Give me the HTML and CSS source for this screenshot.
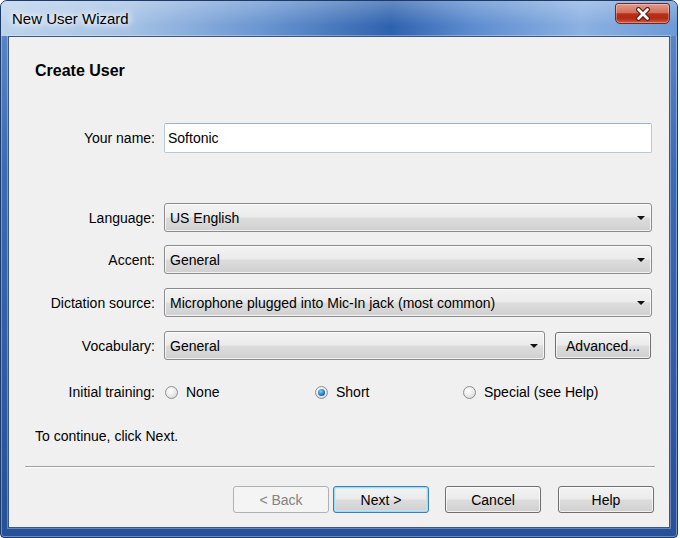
FILE: index.html
```html
<!DOCTYPE html>
<html lang="en">
<head>
    <meta charset="UTF-8">
    <meta name="viewport" content="width=device-width, initial-scale=1.0">
    <title>New User Wizard</title>
    <link rel="stylesheet" href="styles.css">
</head>
<body>
    <div class="window">
        <div class="titlebar">
            <span class="title">New User Wizard</span>
            <button class="close" type="button" aria-label="Close">
                <svg width="18" height="14" viewBox="0 0 18 14">
                    <path d="M4.5 2.5 L13.5 11.5 M13.5 2.5 L4.5 11.5" stroke="#5b2116" stroke-width="5" stroke-linecap="round" fill="none"/>
                    <path d="M4.5 2.5 L13.5 11.5 M13.5 2.5 L4.5 11.5" stroke="#fff" stroke-width="2.6" stroke-linecap="round" fill="none"/>
                </svg>
            </button>
        </div>
        <div class="frame">
            <div class="client">
                <div class="content">
                    <h1>Create User</h1>

                    <div class="row row-name">
                        <label for="userName">Your name:</label>
                        <input type="text" id="userName" class="textbox" value="Softonic">
                    </div>

                    <div class="row row-language">
                        <label>Language:</label>
                        <div class="combo"><span>US English</span><i class="arrow"></i></div>
                    </div>
                    <div class="row">
                        <label>Accent:</label>
                        <div class="combo"><span>General</span><i class="arrow"></i></div>
                    </div>
                    <div class="row">
                        <label>Dictation source:</label>
                        <div class="combo"><span>Microphone plugged into Mic-In jack (most common)</span><i class="arrow"></i></div>
                    </div>
                    <div class="row">
                        <label>Vocabulary:</label>
                        <div class="combo combo-short"><span>General</span><i class="arrow"></i></div>
                        <button type="button" class="btn btn-advanced">Advanced...</button>
                    </div>

                    <div class="row row-radios">
                        <label>Initial training:</label>
                        <div class="radios">
                            <span class="radio"><i class="dot"></i>None</span>
                            <span class="radio checked"><i class="dot"></i>Short</span>
                            <span class="radio"><i class="dot"></i>Special (see Help)</span>
                        </div>
                    </div>

                    <p class="hint">To continue, click Next.</p>
                </div>

                <div class="footer">
                    <div class="separator"></div>
                    <div class="buttons">
                        <button type="button" class="btn btn-back" disabled>&lt; Back</button>
                        <button type="button" class="btn btn-next">Next &gt;</button>
                        <button type="button" class="btn btn-cancel">Cancel</button>
                        <button type="button" class="btn btn-help">Help</button>
                    </div>
                </div>
            </div>
        </div>
    </div>
</body>
</html>
```

FILE: styles.css
```css
body {
    margin: 0;
    background: #fff;
    font-family: "Liberation Sans", Arial, sans-serif;
    font-size: 14px;
    color: #000;
}
.window {
    width: 678px;
    height: 538px;
    box-sizing: border-box;
    border: 1px solid #1d3a68;
    border-radius: 7px 7px 4px 4px;
    overflow: hidden;
    background: linear-gradient(to bottom, #5f8cca 0, #3b6cb6 30%, #25509a 100%);
    box-shadow: inset 0 0 0 1px rgba(255,255,255,0.35);
}
.titlebar {
    height: 35px;
    display: flex;
    align-items: flex-start;
    background:
        linear-gradient(to bottom, rgba(255,255,255,0.25), rgba(255,255,255,0) 70%),
        linear-gradient(to right, #bcd3ec 0, #a4c1e5 130px, #6a96d1 260px, #2f62ae 390px, #5c8ccf 470px, #8cb1e2 580px, #6c9ad7 100%);
}
.title {
    line-height: 35px;
    font-size: 15px;
    padding-left: 11px;
    text-shadow: 0 0 6px #fff, 0 0 10px #fff, 0 0 14px rgba(255,255,255,0.8);
}
.close {
    margin: 2px 7px 0 auto;
    width: 55px;
    height: 21px;
    padding: 0;
    border: 1px solid #6b2a22;
    border-radius: 3px 3px 5px 5px;
    background: linear-gradient(to bottom, #e39a8a 0, #d2705c 45%, #bd2f17 52%, #b02a14 75%, #d35a40 100%);
    box-shadow: inset 0 0 0 1px rgba(255,255,255,0.3);
    display: flex;
    align-items: center;
    justify-content: center;
}
.frame {
    padding: 0 7px 9px 7px;
}
.client {
    height: 490px;
    border: 1px solid #3e5679;
    background: #f0f0f0;
    display: flex;
    flex-direction: column;
    box-shadow: 0 0 0 1px rgba(255,255,255,0.3);
}
.content {
    padding: 24px 17px 0 26px;
}
h1 {
    margin: 0;
    font-size: 16px;
    line-height: 20px;
    font-weight: bold;
}
.row {
    display: flex;
    align-items: center;
    margin-top: 14px;
}
.row label {
    width: 120px;
    margin-right: 9px;
    text-align: right;
    flex-shrink: 0;
}
.row-name {
    margin-top: 42px;
}
.row-language {
    margin-top: 50px;
}
.row-language + .row {
    margin-top: 13px;
}
.textbox {
    flex: 1;
    height: 30px;
    box-sizing: border-box;
    border: 1px solid #b7c8da;
    border-top-color: #9fb2c8;
    border-radius: 2px;
    padding: 0 3px;
    font-family: inherit;
    font-size: 14px;
    background: #fff;
    outline: none;
}
.combo {
    flex: 1;
    height: 29px;
    box-sizing: border-box;
    display: flex;
    align-items: center;
    padding: 0 6px 0 5px;
    border: 1px solid #8b8b8b;
    border-radius: 3px;
    background: linear-gradient(to bottom, #f3f3f3 0, #ebebeb 48%, #dcdcdc 52%, #d0d0d0 100%);
    box-shadow: inset 0 0 0 1px rgba(255,255,255,0.7);
}
.combo-short {
    flex: none;
    width: 381px;
}
.arrow {
    margin-left: auto;
    width: 0;
    height: 0;
    border-left: 4px solid transparent;
    border-right: 4px solid transparent;
    border-top: 4px solid #111;
}
.btn {
    width: 96px;
    height: 27px;
    padding: 0;
    font-family: inherit;
    font-size: 14px;
    color: #000;
    border: 1px solid #707070;
    border-radius: 3px;
    background: linear-gradient(to bottom, #f3f3f3 0, #ebebeb 48%, #dddddd 52%, #cfcfcf 100%);
    box-shadow: inset 0 0 0 1px rgba(255,255,255,0.7);
}
.btn-advanced {
    margin-left: 10px;
}
.btn-back {
    color: #838383;
    border-color: #adb2b5;
    background: #f4f4f4;
    box-shadow: none;
}
.btn-next {
    border-color: #3c7fb1;
    box-shadow: inset 0 0 0 1px #9fdcf7, inset 0 0 0 2px rgba(190,232,250,0.6);
}
.row-radios {
    margin-top: 22px;
    height: 20px;
}
.radios {
    display: flex;
}
.radio {
    display: flex;
    align-items: center;
    width: 150px;
}
.radio + .radio + .radio {
    width: auto;
    margin-left: -2px;
}
.dot {
    width: 13px;
    height: 13px;
    box-sizing: border-box;
    margin: 0 8px 0 1px;
    border: 1px solid #8e8f8f;
    border-radius: 50%;
    background: radial-gradient(circle at 40% 35%, #fff 0, #e8e8e8 55%, #cacaca 100%);
}
.checked .dot::after {
    content: "";
    display: block;
    width: 7px;
    height: 7px;
    margin: 2px;
    border-radius: 50%;
    background: radial-gradient(circle at 40% 35%, #7fd0f6 0, #1d74bd 60%, #0e4a86 100%);
}
.hint {
    margin: 25px 0 0 0;
    line-height: 18px;
}
.footer {
    margin-top: auto;
    padding: 0 14px 14px 16px;
}
.separator {
    border-top: 1px solid #a0a0a0;
    border-bottom: 1px solid #fff;
}
.buttons {
    display: flex;
    justify-content: flex-end;
    margin: 18px 1px 0 0;
}
.btn-next {
    margin-left: 4px;
}
.btn-cancel {
    margin-left: 16px;
}
.btn-help {
    margin-left: 17px;
}
```
